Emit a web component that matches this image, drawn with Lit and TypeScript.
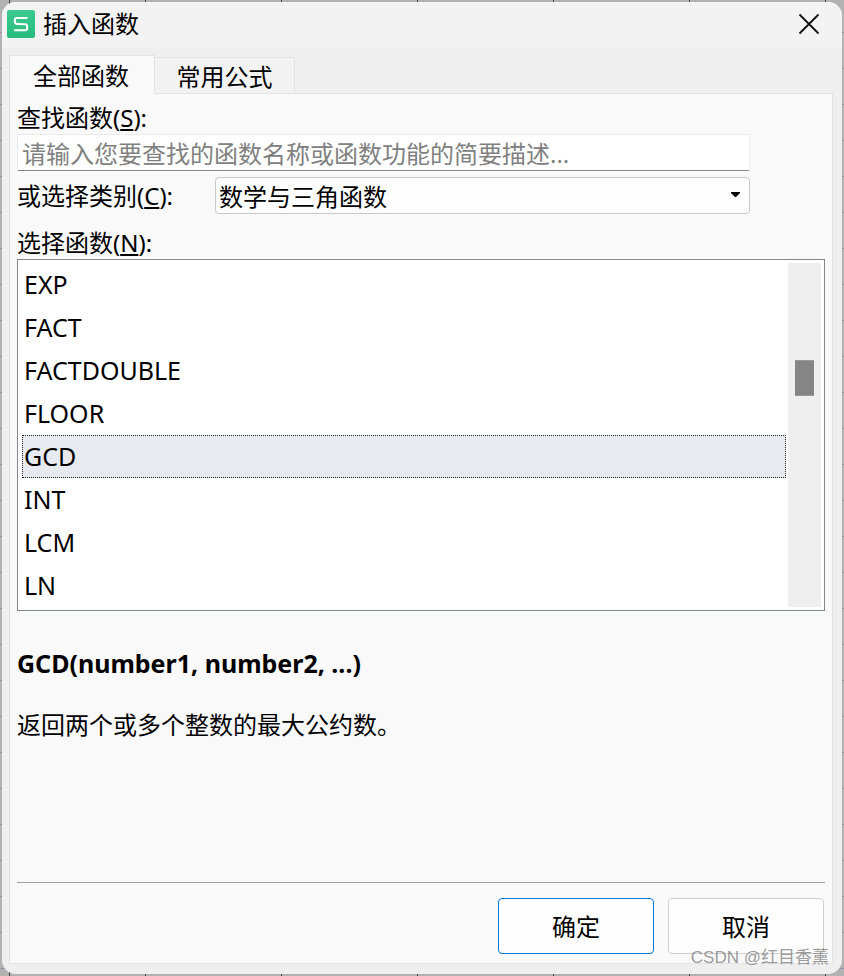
import { LitElement, html, css } from "lit";
import { customElement, state } from "lit/decorators.js";

const FUNCTIONS = ["EXP", "FACT", "FACTDOUBLE", "FLOOR", "GCD", "INT", "LCM", "LN"];

@customElement("app-root")
export class AppRoot extends LitElement {
  @state() private selected = "GCD";

  static styles = css`
    :host {
      display: block;
      color: #000;
      font-family: "Noto Sans", "Noto Sans CJK SC", sans-serif;
      font-size: 24px;
      line-height: 32px;
    }
    * {
      box-sizing: border-box;
    }
    button,
    input,
    select {
      font: inherit;
      color: inherit;
      margin: 0;
    }
    .sheet {
      min-height: 100vh;
      padding: 2px;
      display: flex;
      background:
        repeating-linear-gradient(transparent 0 32px, #9292a4 32px 33px, transparent 33px 36px),
        repeating-linear-gradient(90deg, transparent 0 9px, #444 9px 10px, transparent 10px 136px),
        #b2b2b2;
    }
    .dialog {
      position: relative;
      flex: 1;
      display: flex;
      flex-direction: column;
      background: #efefef;
      border-radius: 14px;
      overflow: hidden;
    }
    .titlebar {
      height: 46px;
      display: flex;
      align-items: center;
      gap: 8px;
      padding: 0 18px 2px 5px;
      background: #f3f3f3;
    }
    .logo {
      display: block;
      width: 28px;
      height: 28px;
    }
    .title {
      margin: 0;
      flex: 1;
      font-size: 24px;
      font-weight: 400;
    }
    .close {
      display: flex;
      padding: 4px;
      border: 0;
      background: none;
    }
    .tabs {
      display: flex;
      align-items: flex-end;
      height: 46px;
      padding: 0 7px;
      margin-bottom: -1px;
      z-index: 1;
    }
    .tab {
      height: 37px;
      width: 140px;
      padding: 2px 0 0;
      border: 1px solid #e3e3e3;
      border-left: 0;
      background: #f2f2f2;
      line-height: 34px;
    }
    .tab.active {
      height: 39px;
      width: 146px;
      padding-right: 2px;
      border: 1px solid #e3e3e3;
      border-bottom: 0;
      background: #f9f9f9;
    }
    .panel {
      flex: 1;
      display: flex;
      flex-direction: column;
      margin: 0 9px 10px 7px;
      padding: 8px 7px 9px;
      border: 1px solid #e3e3e3;
      background: #f9f9f9;
    }
    .form {
      width: 91%;
      max-width: 733px;
    }
    .label {
      display: block;
    }
    .search {
      display: block;
      width: 100%;
      height: 37px;
      padding: 2px 4px 0;
      border: 1px solid #ebebeb;
      border-bottom-color: #868686;
      border-radius: 2px;
      background: #fff;
      outline: 0;
    }
    .search::placeholder {
      color: #808080;
      opacity: 1;
    }
    .category {
      display: grid;
      grid-template-columns: 198px 1fr;
      align-items: center;
      margin: 6px 0 13px;
    }
    .picker {
      position: relative;
    }
    .combo {
      display: block;
      appearance: none;
      width: 100%;
      height: 37px;
      padding: 2px 28px 0 3px;
      border: 1px solid #c8c8c8;
      border-radius: 4px;
      background: #fdfdfd;
      outline: 0;
    }
    .arrow {
      position: absolute;
      right: 10px;
      top: 15px;
      pointer-events: none;
    }
    .listbox {
      display: flex;
      gap: 2px;
      padding: 3px;
      border: 1px solid #828790;
      background: #fff;
    }
    .list {
      flex: 1;
      min-width: 0;
      height: 344px;
      padding: 0 0 0 1px;
      border: 0;
      background: #fff;
      outline: 0;
      overflow: hidden;
      scrollbar-width: none;
      font-size: 25px;
    }
    .option {
      height: 43px;
      min-height: 43px;
      padding: 3px 1px 0;
      border: 1px dotted transparent;
      line-height: 38px;
      color: #000;
    }
    .option:checked {
      border-color: #222;
      color: #000;
      background: linear-gradient(#e7eaef, #e7eaef);
    }
    .scrollbar {
      width: 33px;
      padding: 97px 7px 0;
      background: #efefef;
    }
    .thumb {
      height: 36px;
      background: #858585;
      border: solid #989898;
      border-width: 1px 0;
    }
    .details {
      flex: 1;
      padding-top: 36px;
    }
    .syntax {
      margin: 0 0 30px;
      font-size: 25px;
      font-weight: 700;
    }
    .summary {
      margin: 0;
    }
    .actions {
      display: flex;
      justify-content: flex-end;
      gap: 14px;
      padding: 15px 1px 0;
      border-top: 1px solid #a0a0a0;
    }
    .action {
      width: 156px;
      height: 56px;
      padding: 2px 0 0;
      border: 1px solid #d0d0d0;
      border-radius: 4px;
      background: #fdfdfd;
    }
    .action.primary {
      border-color: #0078d4;
    }
    .watermark {
      position: absolute;
      right: 13px;
      bottom: 4px;
      font-family: "Liberation Sans", "Noto Sans CJK SC", sans-serif;
      font-size: 17px;
      line-height: 24px;
      color: #777b;
    }
  `;

  render() {
    return html`
      <div class="sheet">
        <main class="dialog">
          <header class="titlebar">
            <svg class="logo" viewBox="0 0 28 28" aria-hidden="true">
              <defs>
                <linearGradient id="g" x1="0" y1="0" x2="0" y2="1">
                  <stop offset="0" stop-color="#3bcb8e" />
                  <stop offset="1" stop-color="#26bb7c" />
                </linearGradient>
              </defs>
              <rect width="28" height="28" rx="2" fill="url(#g)" />
              <path
                d="M20.5 8H10Q7.8 8 7.8 10V11.6Q7.8 13.8 10 13.9L18 14.2Q20.2 14.3 20.2 16.4V18Q20.2 20.2 18 20.2H7"
                fill="none"
                stroke="#fff"
                stroke-width="2"
              />
            </svg>
            <h1 class="title">插入函数</h1>
            <button class="close" aria-label="关闭">
              <svg width="22" height="22" viewBox="0 0 22 22">
                <path d="M1.500 1.500L20.500 20.500M20.500 1.500L1.500 20.500" stroke="#111" stroke-width="1.800" />
              </svg>
            </button>
          </header>
          <div class="tabs" role="tablist">
            <button class="tab active" role="tab" aria-selected="true">全部函数</button>
            <button class="tab" role="tab" aria-selected="false">常用公式</button>
          </div>
          <section class="panel" role="tabpanel">
            <div class="form">
              <label class="label" for="search">查找函数(<u>S</u>):</label>
              <input class="search" id="search" type="text" placeholder="请输入您要查找的函数名称或函数功能的简要描述..." />
              <div class="category">
                <label class="label" for="category">或选择类别(<u>C</u>):</label>
                <div class="picker">
                  <select class="combo" id="category">
                    <option>数学与三角函数</option>
                  </select>
                  <svg class="arrow" width="9" height="5" viewBox="0 0 9 5" aria-hidden="true">
                    <path d="M0 0H9V1L5 5H4L0 1Z" />
                  </svg>
                </div>
              </div>
            </div>
            <label class="label" for="functions">选择函数(<u>N</u>):</label>
            <div class="listbox">
              <select
                class="list"
                id="functions"
                size="8"
                @change=${(e: Event) => (this.selected = (e.target as HTMLSelectElement).value)}
              >
                ${FUNCTIONS.map(
                  (name) => html`<option class="option" ?selected=${name === this.selected}>${name}</option>`
                )}
              </select>
              <div class="scrollbar"><div class="thumb"></div></div>
            </div>
            <div class="details">
              <h2 class="syntax">GCD(number1, number2, ...)</h2>
              <p class="summary">返回两个或多个整数的最大公约数。</p>
            </div>
            <footer class="actions">
              <button class="action primary">确定</button>
              <button class="action">取消</button>
            </footer>
          </section>
          <div class="watermark">CSDN @红目香薰</div>
        </main>
      </div>
    `;
  }
}
